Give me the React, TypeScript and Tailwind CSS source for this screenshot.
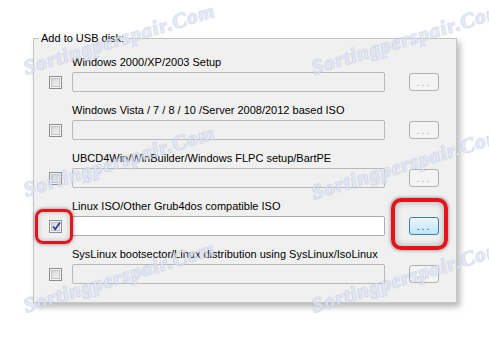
import React from "react";

const ROWS = [
  { label: "Windows 2000/XP/2003 Setup", checked: false },
  { label: "Windows Vista / 7 / 8 / 10 /Server 2008/2012 based ISO", checked: false },
  { label: "UBCD4Win/WinBuilder/Windows FLPC setup/BartPE", checked: false },
  { label: "Linux ISO/Other Grub4dos compatible ISO", checked: true },
  { label: "SysLinux bootsector/Linux distribution using SysLinux/IsoLinux", checked: false },
];

// watermark positions (left-center is the rotation origin)
const MARKS = [
  { left: 24, top: 68 },
  { left: 312, top: 68 },
  { left: 24, top: 190 },
  { left: 312, top: 193 },
  { left: 24, top: 306 },
  { left: 312, top: 306 },
];

function CheckBox({ checked }: { checked: boolean }) {
  return (
    <div className="flex h-[13px] w-[13px] shrink-0 items-center justify-center border border-[#8e8f8f] bg-[#f4f4f4]">
      <div className="relative h-[9px] w-[9px] border border-[#c4c4c4] bg-gradient-to-br from-[#d6d6d6] to-[#f2f2f2]">
        {checked && (
          <svg className="absolute -left-[1px] -top-[2px]" width="11" height="11" viewBox="0 0 11 11">
            <path d="M2 5.5 L4.3 8.3 L9 1.5" fill="none" stroke="#2a3f9e" strokeWidth="1.8" />
          </svg>
        )}
      </div>
    </div>
  );
}

function Row({ label, checked }: { label: string; checked: boolean }) {
  return (
    <div className="flex flex-col">
      <div className="h-[14px] pl-[23px] text-[11px] leading-[14px] whitespace-nowrap text-black">{label}</div>
      <div className="mt-[3px] flex h-[20px] items-center">
        <CheckBox checked={checked} />
        <div
          className={
            checked
              ? "ml-[10px] h-[20px] w-[313px] rounded-[2px] border border-[#abadb3] bg-white"
              : "ml-[10px] h-[20px] w-[313px] rounded-[2px] border border-[#b9b9b9] bg-[#f0f0f0]"
          }
        />
        {checked ? (
          <div className="ml-[24px] flex h-[18px] w-[30px] items-end justify-center rounded-[3px] border border-[#3c7fb1] bg-gradient-to-b from-[#eaf6fd] to-[#bee6fd] pb-[2px] text-[10px] leading-[10px] tracking-[2px] text-[#3a2a9e]">
            ...
          </div>
        ) : (
          <div className="ml-[24px] flex h-[18px] w-[30px] items-end justify-center rounded-[3px] border border-[#adb2b5] bg-[#f4f4f4] pb-[2px] text-[10px] leading-[10px] tracking-[2px] text-[#a6a6a6]">
            ...
          </div>
        )}
      </div>
    </div>
  );
}

export default function App() {
  return (
    <div className="relative h-[337px] w-[489px] overflow-hidden bg-white pl-[33px] pt-[31px] font-['Liberation_Sans',Arial,sans-serif]">
      <fieldset className="w-[424px] border border-[#c6c6c6] bg-[#f0f0f0] pb-[18px] shadow-[3px_4px_6px_rgba(0,0,0,0.28)]">
        <legend className="ml-[5px] px-[2px] text-[11px] leading-[14px] text-black">Add to USB disk:</legend>
        <div className="mt-[10px] flex flex-col gap-[11px] pl-[15px]">
          {ROWS.map((r) => (
            <Row key={r.label} label={r.label} checked={r.checked} />
          ))}
        </div>
      </fieldset>

      {/* red highlight frames */}
      <div className="absolute left-[35px] top-[209px] h-[35px] w-[38px] rounded-[8px] border-[3px] border-[#e3141b] shadow-[0_0_3px_1px_rgba(0,0,0,0.3),inset_0_0_5px_rgba(0,0,0,0.25)]" />
      <div className="absolute left-[391px] top-[198px] h-[52px] w-[57px] rounded-[10px] border-[4px] border-[#e3141b] shadow-[0_0_3px_1px_rgba(0,0,0,0.3),inset_0_0_7px_rgba(0,0,0,0.3)]" />

      {/* watermark */}
      <div className="pointer-events-none absolute inset-0">
        {MARKS.map((m, i) => (
          <div
            key={i}
            className="absolute origin-left -translate-y-1/2 -rotate-[17deg] whitespace-nowrap font-['Liberation_Serif',serif] text-[21px] leading-[24px] font-bold italic tracking-[1px] text-[#dfe3f3] opacity-75 [text-shadow:0_0_1px_#a7b3d8,0_0_1px_#a7b3d8]"
            style={{ left: m.left, top: m.top }}
          >
            Sortingperspair.Com
          </div>
        ))}
      </div>
    </div>
  );
}
